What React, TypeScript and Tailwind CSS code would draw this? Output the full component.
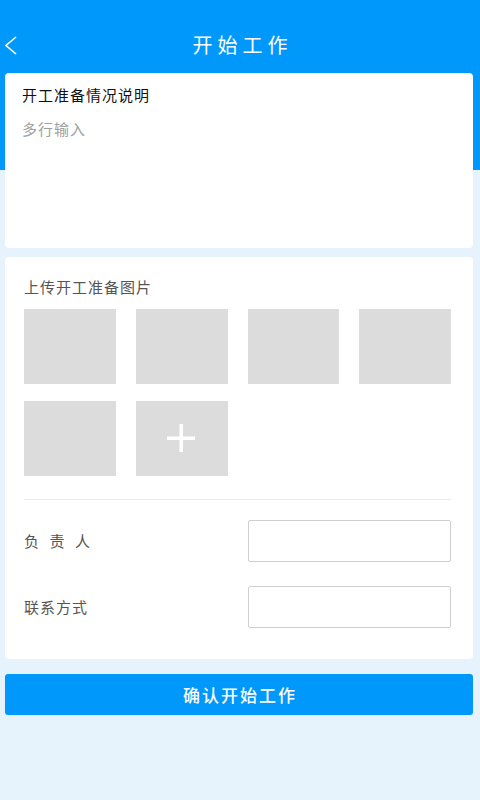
import React from "react";

const font = { fontFamily: '"Noto Sans CJK SC", "Noto Sans", sans-serif' };

function Box({ plus }: { plus?: boolean }) {
  return (
    <div className="h-[75px] bg-[#dcdcdc] flex items-center justify-center">
      {plus && (
        <svg width="30" height="30" viewBox="0 0 30 30" className="-mt-[2px] -ml-[2px]">
          <rect x="13.5" y="1" width="3.5" height="28" fill="#ffffff" />
          <rect x="1" y="13.5" width="28" height="3.5" fill="#ffffff" />
        </svg>
      )}
    </div>
  );
}

export default function App() {
  return (
    <div
      style={font}
      className="min-h-[800px] w-[480px] pt-[17px] bg-[linear-gradient(to_bottom,#0099fb_170px,#e6f3fd_170px)]"
    >
      <div className="relative h-[56px] flex items-center justify-center">
        <svg
          className="absolute left-[4px] top-[19px]"
          width="14"
          height="19"
          viewBox="0 0 14 19"
          fill="none"
        >
          <path d="M12 1 L2 9.5 L12 18" stroke="#ffffff" strokeWidth="1.6" />
        </svg>
        <span className="text-white text-[20px] tracking-[5px] pl-[5px]">开始工作</span>
      </div>

      <div className="ml-[5px] mr-[7px] h-[175px] bg-white rounded-[4px] px-[17px] pt-[12px]">
        <div className="text-[15px] leading-[20px] text-[#111] tracking-[1px]">开工准备情况说明</div>
        <div className="mt-[14px] text-[15px] leading-[20px] text-[#a0a0a0] tracking-[1px]">多行输入</div>
      </div>

      <div className="ml-[5px] mr-[7px] mt-[9px] bg-white rounded-[4px] pl-[19px] pr-[22px] pt-[22px] pb-[31px]">
        <div className="text-[15px] leading-[16px] text-[#555] tracking-[1px]">上传开工准备图片</div>
        <div className="mt-[14px] grid grid-cols-4 gap-x-[20px] gap-y-[17px]">
          <Box />
          <Box />
          <Box />
          <Box />
          <Box />
          <Box plus />
        </div>
        <div className="mt-[23px] h-[1px] bg-[#eaeaea]" />
        <div className="mt-[20px] flex items-center justify-between">
          <span className="w-[66px] flex justify-between text-[15px] text-[#555]">
            <span>负</span>
            <span>责</span>
            <span>人</span>
          </span>
          <div className="w-[203px] h-[42px] border border-[#cfcfcf] rounded-[2px] bg-white" />
        </div>
        <div className="mt-[24px] flex items-center justify-between">
          <span className="text-[15px] text-[#555] tracking-[1px]">联系方式</span>
          <div className="w-[203px] h-[42px] border border-[#cfcfcf] rounded-[2px] bg-white" />
        </div>
      </div>

      <div className="ml-[5px] mr-[7px] mt-[15px] h-[41px] rounded-[3px] bg-[#0099fb] flex items-center justify-center">
        <span className="text-white text-[17px] font-medium tracking-[2px] pl-[2px]">确认开始工作</span>
      </div>
    </div>
  );
}
